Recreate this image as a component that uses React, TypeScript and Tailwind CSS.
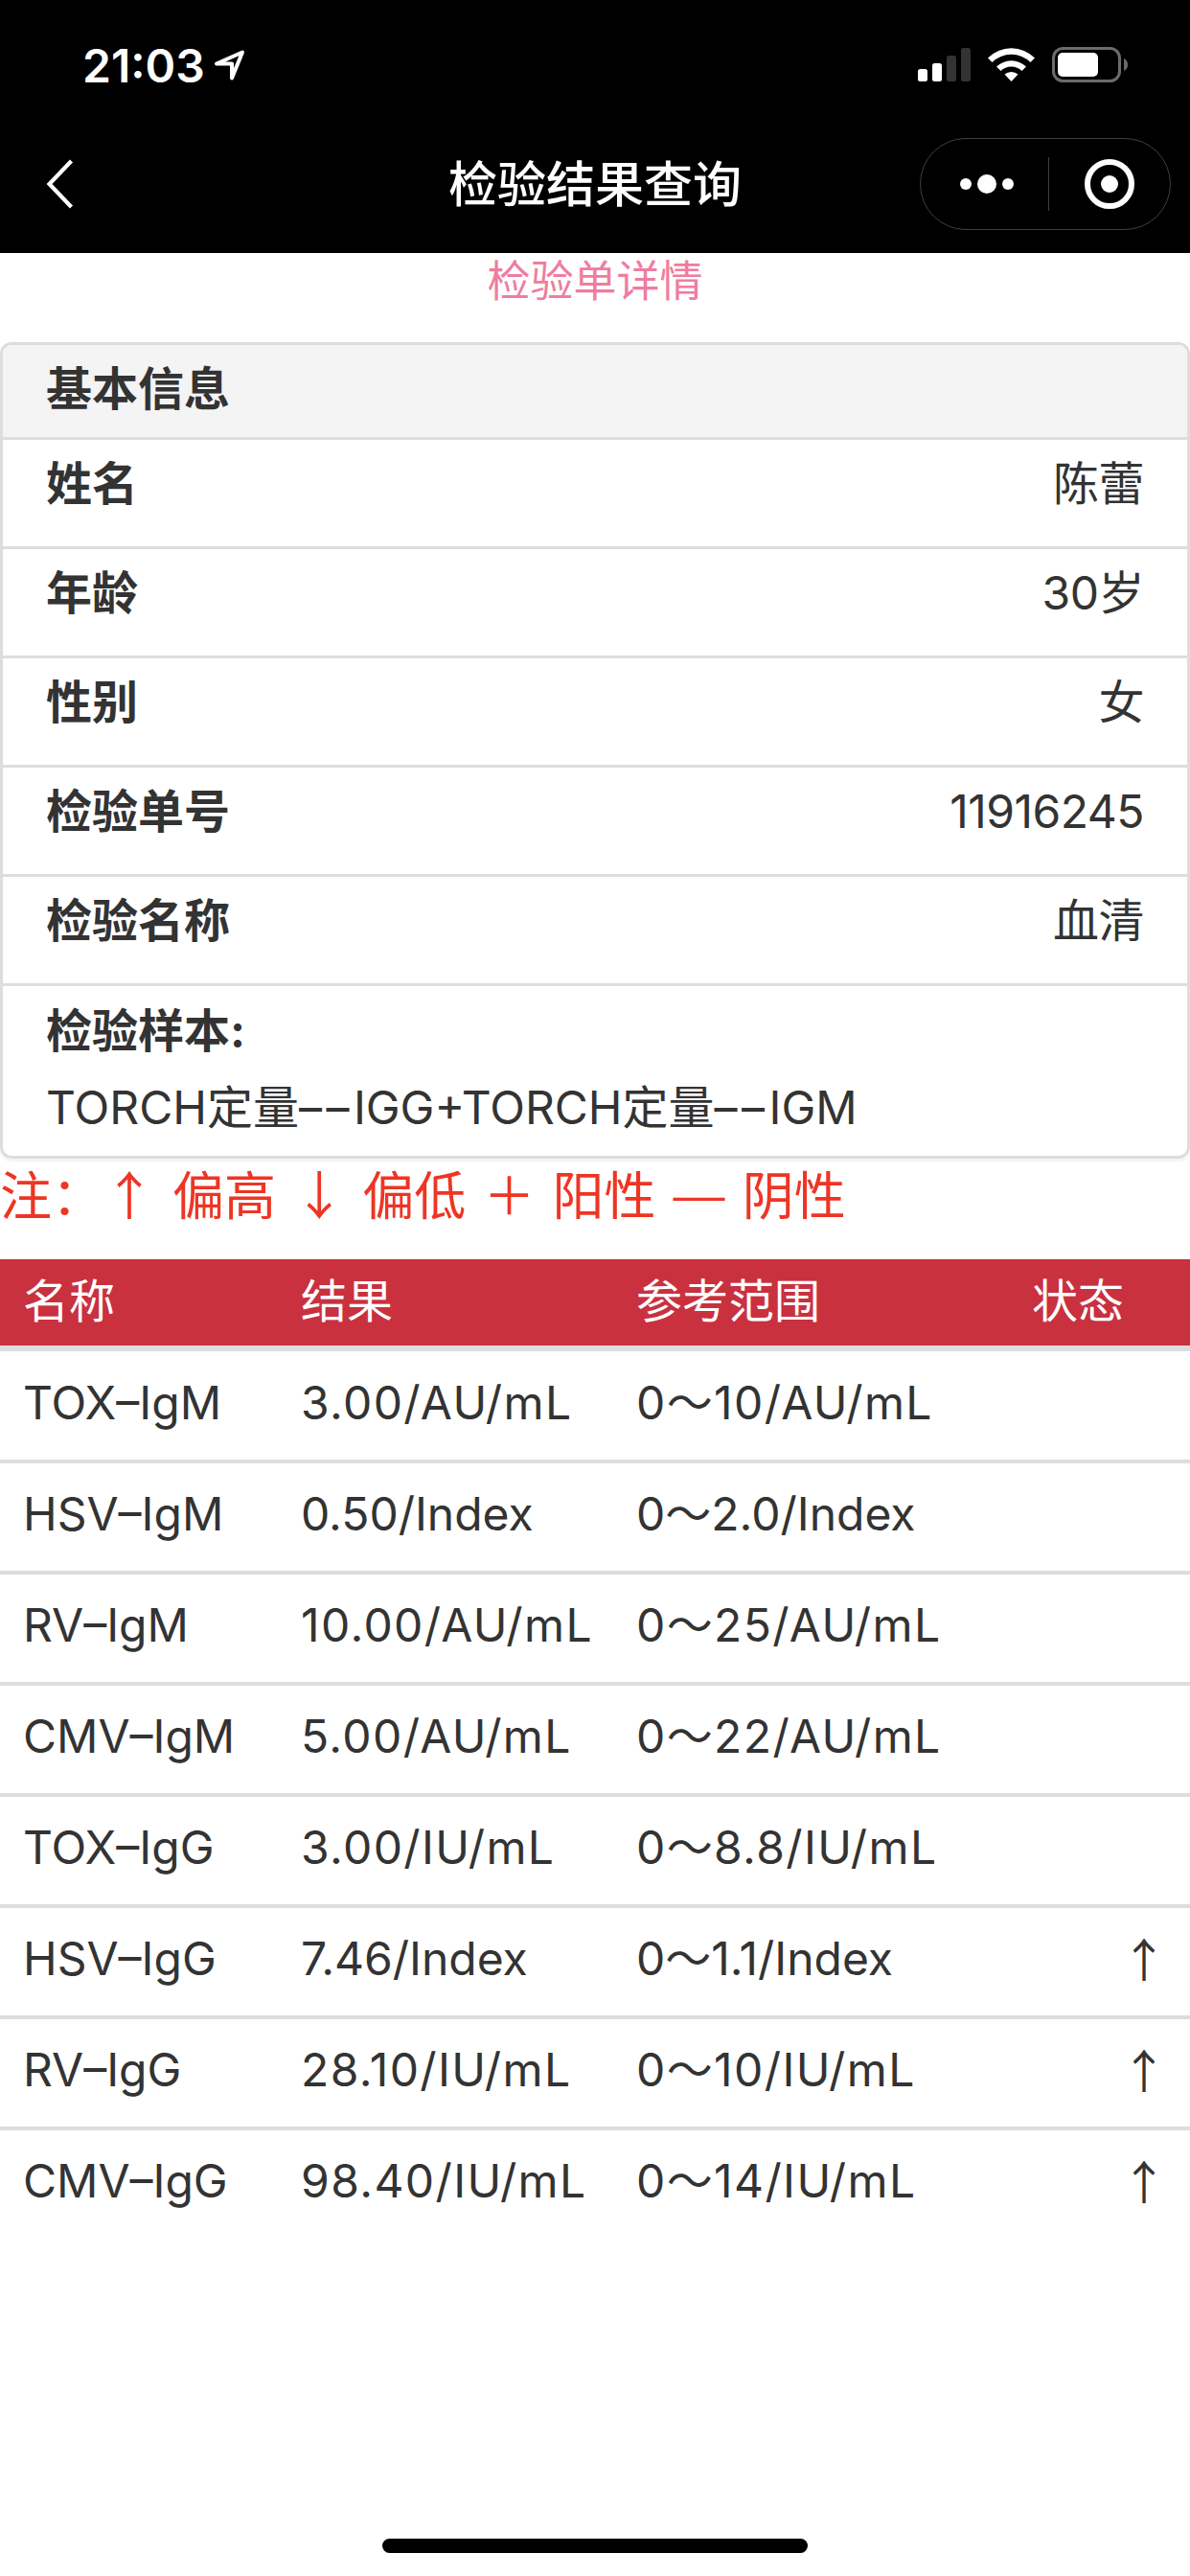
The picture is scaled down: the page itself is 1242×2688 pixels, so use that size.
const basicInfo = [
  { label: "姓名", value: "陈蕾" },
  { label: "年龄", value: "30岁" },
  { label: "性别", value: "女" },
  { label: "检验单号", value: "11916245" },
  { label: "检验名称", value: "血清" },
];

const results = [
  { name: "TOX–IgM", result: "3.00/AU/mL", range: "0～10/AU/mL", status: "" },
  { name: "HSV–IgM", result: "0.50/Index", range: "0～2.0/Index", status: "" },
  { name: "RV–IgM", result: "10.00/AU/mL", range: "0～25/AU/mL", status: "" },
  { name: "CMV–IgM", result: "5.00/AU/mL", range: "0～22/AU/mL", status: "" },
  { name: "TOX–IgG", result: "3.00/IU/mL", range: "0～8.8/IU/mL", status: "" },
  { name: "HSV–IgG", result: "7.46/Index", range: "0～1.1/Index", status: "↑" },
  { name: "RV–IgG", result: "28.10/IU/mL", range: "0～10/IU/mL", status: "↑" },
  { name: "CMV–IgG", result: "98.40/IU/mL", range: "0～14/IU/mL", status: "↑" },
];

export default function App() {
  return (
    <div
      lang="zh-CN"
      className="flex h-[2688px] w-[1242px] flex-col overflow-hidden bg-white font-['Inter','Noto_Sans_CJK_SC',sans-serif] text-[48px] text-[#333]"
    >
      <header className="h-[264px] shrink-0 bg-black text-white">
        <StatusBar />
        <NavBar />
      </header>

      <main className="flex flex-1 flex-col">
        <h2 className="h-[93px] text-center text-[45px] leading-[60px] text-[#f07ca0]">检验单详情</h2>

        {/* Basic info panel */}
        <section className="overflow-hidden rounded-[12px] border-[3px] border-[#ddd] shadow-[0_3px_3px_rgba(0,0,0,0.05)]">
          <div className="h-[96px] bg-[#f4f4f4] px-[45px] leading-[92px] font-bold">基本信息</div>
          {basicInfo.map((item) => (
            <div
              key={item.label}
              className="flex h-[114px] justify-between border-t-[3px] border-[#ddd] px-[45px] leading-[92px]"
            >
              <span className="font-bold">{item.label}</span>
              <span className="tracking-[-0.5px]">{item.value}</span>
            </div>
          ))}
          <div className="h-[180px] border-t-[3px] border-[#ddd] px-[45px] pt-[7px] leading-[80px]">
            <p className="font-bold">检验样本:</p>
            <p>
              TORCH定量<span className="tracking-[4.500px]">––</span>IGG+TORCH定量
              <span className="tracking-[4.500px]">––</span>IGM
            </p>
          </div>
        </section>

        <p className="h-[105px] font-['Noto_Sans_CJK_SC',sans-serif] text-[54px] leading-[72px] whitespace-nowrap text-[#ee3524] [word-spacing:6px]">
          注：↑ 偏高 ↓ 偏低 ＋ 阳性 <span className="inline-block w-[54px] text-center font-['Inter'] font-light">—</span> 阴性
        </p>

        {/* Results table */}
        <div className="grid h-[96px] grid-cols-[290px_350px_412px_1fr] border-b-[6px] border-[#ddd] bg-[#c9313f] pl-[24px] leading-[87px] text-white">
          <span>名称</span>
          <span>结果</span>
          <span>参考范围</span>
          <span className="pl-px">状态</span>
        </div>
        <div className="divide-y-[4px] divide-[#ddd] pt-[1px]">
          {results.map((row) => {
            const tracking = row.result.endsWith("mL") ? "tracking-[1.4px]" : "tracking-[0px]";
            return (
              <div
                key={row.name}
                className="grid h-[116px] grid-cols-[290px_350px_412px_1fr] pl-[24px] leading-[106px] whitespace-nowrap"
              >
                <span>{row.name}</span>
                <span className={tracking}>{row.result}</span>
                <span className={tracking}>{row.range}</span>
                <span className="pr-[24px] text-right font-['Noto_Sans_CJK_SC',sans-serif] leading-[103px]">
                  {row.status}
                </span>
              </div>
            );
          })}
        </div>
      </main>

      <footer className="flex h-[39px] shrink-0 justify-center">
        <div className="h-[15px] w-[444px] rounded-full bg-black" />
      </footer>
    </div>
  );
}

function StatusBar() {
  return (
    <div className="flex h-[132px] items-start justify-between pt-[44px] pr-[64px] pl-[86px]">
      <div className="flex">
        <span className="text-[48px] leading-[49px] font-semibold">21:03</span>
        <svg className="mt-[6px] ml-[8px]" width="36" height="36" viewBox="0 0 36 36" fill="none">
          <path
            d="M31 4.500 4 16.500H20V31.500Z"
            stroke="#fff"
            strokeWidth="4"
            strokeLinejoin="round"
          />
        </svg>
      </div>
      <svg width="220" height="40" viewBox="958 48 220 40" className="mt-[4px]" fill="#fff">
        <rect x="958" y="72" width="10" height="13" rx="2.500" />
        <rect x="973" y="66" width="10" height="19" rx="2.500" />
        <rect x="988" y="58" width="10" height="27" rx="2.500" fill="#333" />
        <rect x="1003" y="50" width="10" height="35" rx="2.500" fill="#333" />
        <path d="M1031 60.500A34.500 34.500 0 0 1 1080 60.500L1075.500 65A28.500 28.500 0 0 0 1035.500 65Z" />
        <path d="M1040 69.500A22.500 22.500 0 0 1 1071 69.500L1066.500 74A15.500 15.500 0 0 0 1044.500 74Z" />
        <path d="M1048.500 77.500A11 11 0 0 1 1062.500 77.500L1055.500 85Z" />
        <rect x="1099.500" y="50.500" width="69" height="34" rx="10" fill="none" stroke="#6b6b6b" strokeWidth="3" />
        <rect x="1104" y="55" width="42" height="25" rx="5" />
        <path d="M1173 61Q1177 63 1177 67.500T1173 74Z" fill="#6b6b6b" />
      </svg>
    </div>
  );
}

function NavBar() {
  return (
    <div className="grid h-[132px] grid-cols-[1fr_auto_1fr] items-start pr-[20px] pl-[46px]">
      <svg className="mt-[33px]" width="32" height="54" viewBox="0 0 32 54" fill="none">
        <path d="M28.500 3 5.500 27 28.500 51" stroke="#fff" strokeWidth="4.200" />
      </svg>
      <h1 className="translate-x-[-13px] pt-[23px] text-[51px] leading-[76px] font-medium">检验结果查询</h1>
      <div className="mt-[12px] flex h-[96px] w-[262px] items-center justify-self-end rounded-full border border-[#404040]">
        <div className="flex flex-1 items-center justify-center gap-[6px] pl-[6px]">
          <span className="size-[12px] rounded-full bg-white" />
          <span className="size-[20px] rounded-full bg-white" />
          <span className="size-[12px] rounded-full bg-white" />
        </div>
        <div className="h-[56px] w-px bg-[#404040]" />
        <div className="flex flex-1 justify-center">
          <span className="flex size-[52px] items-center justify-center rounded-full border-[6px] border-white">
            <span className="size-[18px] rounded-full bg-white" />
          </span>
        </div>
      </div>
    </div>
  );
}
